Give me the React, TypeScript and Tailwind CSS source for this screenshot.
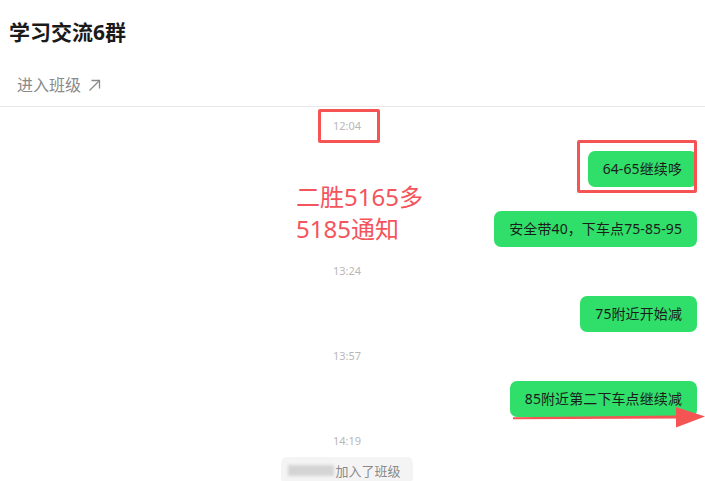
import { Fragment } from "react";

type ChatItem =
  | { kind: "time"; text: string; gapTop: string }
  | { kind: "bubble"; text: string; gapTop: string };

const items: ChatItem[] = [
  { kind: "time", text: "12:04", gapTop: "mt-[11px]" },
  { kind: "bubble", text: "64-65继续哆", gapTop: "mt-[17px]" },
  { kind: "bubble", text: "安全带40，下车点75-85-95", gapTop: "mt-[24px]" },
  { kind: "time", text: "13:24", gapTop: "mt-[16px]" },
  { kind: "bubble", text: "75附近开始减", gapTop: "mt-[17px]" },
  { kind: "time", text: "13:57", gapTop: "mt-[16px]" },
  { kind: "bubble", text: "85附近第二下车点继续减", gapTop: "mt-[17px]" },
  { kind: "time", text: "14:19", gapTop: "mt-[16px]" },
];

function TimeStamp({ text, gapTop }: { text: string; gapTop: string }) {
  return (
    <div className={`${gapTop} flex justify-center pr-[11px]`}>
      <span className="text-[11px] leading-4 text-[#b8b8b8]">{text}</span>
    </div>
  );
}

function Bubble({ text, gapTop }: { text: string; gapTop: string }) {
  return (
    <div className={`${gapTop} flex justify-end pr-[8px]`}>
      <div className="h-9 rounded-[7px] bg-[#2fdf69] px-[15px] py-[7px] text-[14px] leading-[22px] tracking-[0.1px] text-[#1c1c1c]">
        {text}
      </div>
    </div>
  );
}

export default function App() {
  return (
    <div
      className="relative h-[481px] w-[705px] overflow-hidden bg-white"
      style={{ fontFamily: '"Noto Sans", "Noto Sans CJK SC", sans-serif' }}
    >
      <header>
        <div className="flex h-16 items-center px-[9px]">
          <h1 className="text-[21px] font-bold leading-7 text-[#1a1a1a]">学习交流6群</h1>
        </div>
        <div className="flex h-[43px] items-center gap-[7px] border-b border-[#e8e8e8] px-[17px]">
          <span className="text-[16px] leading-6 text-[#8a8a8a]">进入班级</span>
          <svg width="13" height="13" viewBox="0 0 13 13" fill="none" stroke="#8a8a8a" strokeWidth="1.3">
            <path d="M1.5 11.5 L11.5 1.5" />
            <path d="M3.5 1.5 H11.5 V9.5" />
          </svg>
        </div>
      </header>

      <main className="flex flex-col">
        {items.map((item, i) => (
          <Fragment key={i}>
            {item.kind === "time" ? (
              <TimeStamp text={item.text} gapTop={item.gapTop} />
            ) : (
              <Bubble text={item.text} gapTop={item.gapTop} />
            )}
          </Fragment>
        ))}
        <div className="mt-[8px] flex justify-center pr-[11px]">
          <div className="flex h-[27px] items-center rounded-[6px] bg-[#f4f4f4] pl-[7px] pr-[12px]">
            <div className="mr-[1px] h-[11px] w-[46px] bg-[#d4d4d4] blur-[1.5px]" />
            <span className="text-[13px] leading-5 text-[#8a8a8a]">加入了班级</span>
          </div>
        </div>
      </main>

      {/* annotations drawn over the screenshot */}
      <div className="absolute left-[318px] top-[109px] h-[34px] w-[62px] rounded-[2px] border-[3px] border-[#f55454]" />
      <div className="absolute left-[577px] top-[140px] h-[53px] w-[120px] rounded-[2px] border-[3px] border-[#f55454]" />
      <div className="absolute left-[296px] top-[181px] text-[24px] leading-[32px] text-[#f4545c]">
        <div>二胜5165多</div>
        <div>5185通知</div>
      </div>
      <svg className="absolute left-[510px] top-[404px]" width="195" height="26" viewBox="0 0 195 26">
        <path d="M3 13.2 L168 11.6 L168 14.6 L3 15.2 Z" fill="#f55454" />
        <path d="M166 3 L195 12.5 L166 23.5 Z" fill="#f55454" />
      </svg>
    </div>
  );
}
